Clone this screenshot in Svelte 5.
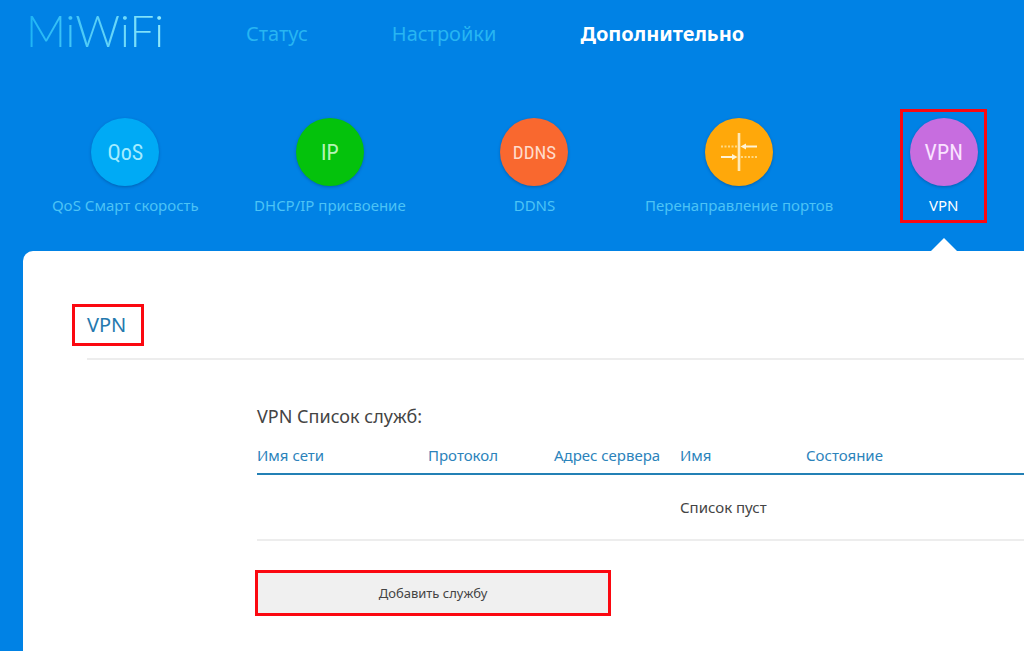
<script>
  const menu = [
    { label: "Статус", active: false },
    { label: "Настройки", active: false },
    { label: "Дополнительно", active: true },
  ];

  const sections = [
    { id: "qos", icon: "QoS", label: "QoS Смарт скорость" },
    { id: "ip", icon: "IP", label: "DHCP/IP присвоение" },
    { id: "ddns", icon: "DDNS", label: "DDNS" },
    { id: "ports", icon: "", label: "Перенаправление портов" },
    { id: "vpn", icon: "VPN", label: "VPN" },
  ];

  const columns = ["Имя сети", "Протокол", "Адрес сервера", "Имя", "Состояние"];

  let current = "vpn";
</script>

<div class="page">
  <header>
    <a class="logo" href="#home">MiWiFi</a>
    <nav class="menu">
      {#each menu as item}
        <a href="#menu" class:active={item.active}>{item.label}</a>
      {/each}
    </nav>
  </header>

  <nav class="sections">
    {#each sections as section}
      <div class="cell">
        <a
          href="#{section.id}"
          class="section"
          class:current={section.id === current}
          on:click={() => (current = section.id)}>
          <span class="circle {section.id}">
            {#if section.icon}
              {section.icon}
            {:else}
              <svg viewBox="0 0 40 40" width="40" height="40" aria-hidden="true">
                <path d="M20 1V39" stroke="#ffe9b8" stroke-width="2.6" />
                <path d="M38 14.5H26M2 25H15" stroke="#fff3d6" stroke-width="2" />
                <path d="M21.5 14.5L27 11.5V17.5ZM18.5 25L13 22V28Z" fill="#fff3d6" />
                <path
                  d="M2 14.5H18M22 25H38"
                  stroke="#ffd883"
                  stroke-width="2"
                  stroke-dasharray="2 1.5" />
              </svg>
            {/if}
          </span>
          <span class="label">{section.label}</span>
        </a>
      </div>
    {/each}
  </nav>

  <main>
    <div class="title">
      <h1>VPN</h1>
    </div>
    <section class="services">
      <h2>VPN Список служб:</h2>
      <table>
        <thead>
          <tr>
            {#each columns as column}
              <th>{column}</th>
            {/each}
          </tr>
        </thead>
        <tbody>
          <tr>
            <td colspan="3"></td>
            <td colspan="2">Список пуст</td>
          </tr>
        </tbody>
      </table>
      <button type="button">Добавить службу</button>
    </section>
  </main>
</div>

<style>
  :global(body) {
    margin: 0;
    background: #0082e5;
  }
  .page {
    min-height: 100vh;
    display: flex;
    flex-direction: column;
    overflow: hidden;
    font-family: "Noto Sans", "Open Sans", sans-serif;
    background: #0082e5;
  }
  a {
    text-decoration: none;
  }
  header {
    display: flex;
    align-items: center;
    height: 68px;
    padding-left: 26px;
  }
  .logo {
    width: 220px;
    padding-bottom: 8px;
    font-family: Lato, sans-serif;
    font-size: 44px;
    font-weight: 300;
    line-height: 60px;
    color: transparent;
    background: linear-gradient(90deg, #1bb4f5, #8fe9fb 136px);
    background-clip: text;
  }
  .menu {
    display: flex;
    gap: 84px;
    font-size: 20px;
    line-height: 28px;
  }
  .menu a {
    color: #27b5f2;
  }
  .menu .active {
    color: #fff;
    font-weight: 700;
  }
  .sections {
    display: grid;
    grid-template-columns: repeat(5, 1fr);
    margin: 41px -22px 0 23px;
    height: 142px;
  }
  .cell {
    display: flex;
    justify-content: center;
    align-items: flex-start;
  }
  .section {
    position: relative;
    display: flex;
    flex-direction: column;
    align-items: center;
    box-sizing: border-box;
    min-width: 87px;
    height: 114px;
    padding-top: 6px;
    border: 3px solid transparent;
    color: #4cc3f6;
  }
  .section.current {
    color: #fff;
    border-color: #fb0810;
  }
  .section.current::after {
    content: "";
    position: absolute;
    top: 126px;
    left: 50%;
    margin-left: -13px;
    border: 13px solid transparent;
    border-top-width: 0;
    border-bottom-color: #fff;
  }
  .circle {
    display: flex;
    align-items: center;
    justify-content: center;
    width: 68px;
    height: 68px;
    border-radius: 50%;
    font-family: "Roboto Condensed", "Liberation Sans Narrow", sans-serif;
    font-size: 22px;
    box-shadow: 0 1px 3px rgba(0, 50, 110, 0.4);
  }
  .qos {
    background: #00aaf5;
    color: #a4ecff;
  }
  .ip {
    background: #04c20c;
    color: #b5f5b5;
  }
  .ddns {
    background: #f9682f;
    color: #ffdccb;
    font-size: 19px;
  }
  .ports {
    background: #ffa80a;
  }
  .vpn {
    background: #c76ddf;
    color: #fae3ff;
  }
  .label {
    margin-top: 8px;
    font-size: 15px;
    line-height: 22px;
    white-space: nowrap;
  }
  main {
    flex: 1;
    margin-left: 23px;
    border-radius: 10px 0 0 0;
    background: #fff;
  }
  .title {
    margin-left: 64px;
    padding: 53px 0 12px;
    border-bottom: 2px solid #ededed;
  }
  h1 {
    width: fit-content;
    margin: 0 0 0 -15px;
    padding: 3px 15px 3px 12px;
    border: 3px solid #fb0810;
    font-size: 20px;
    font-weight: 400;
    line-height: 30px;
    color: #2479ae;
  }
  .services {
    margin-left: 234px;
    padding: 42px 0 36px;
  }
  h2 {
    margin: 0;
    font-size: 18px;
    font-weight: 400;
    line-height: 28px;
    color: #444;
  }
  table {
    width: 100%;
    table-layout: fixed;
    border-collapse: collapse;
    font-size: 15px;
    line-height: 24px;
  }
  th {
    width: 126px;
    padding: 13px 0 6px;
    border-bottom: 2px solid #2380b5;
    font-weight: 400;
    text-align: left;
    white-space: nowrap;
    color: #2b83bb;
  }
  th:first-child {
    width: 171px;
  }
  th:last-child {
    width: auto;
  }
  td {
    padding: 20px 0;
    border-bottom: 2px solid #ededed;
    color: #444;
  }
  button {
    width: 356px;
    height: 46px;
    margin: 29px 0 0 -2px;
    border: 3px solid #fb0810;
    background: #f0f0f0;
    font-family: inherit;
    font-size: 13px;
    color: #444;
  }
</style>
